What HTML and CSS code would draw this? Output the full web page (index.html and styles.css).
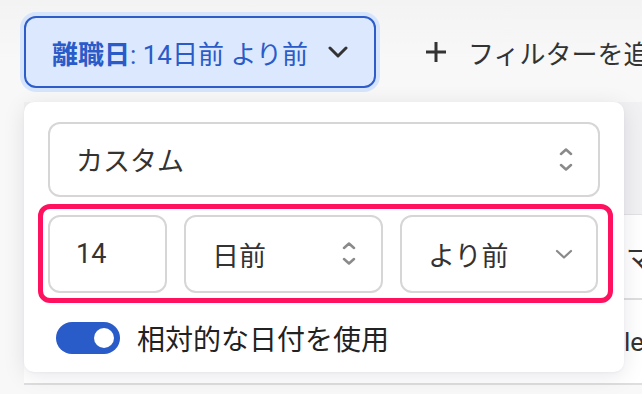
FILE: index.html
```html
<!DOCTYPE html>
<html lang="ja">
<head>
<meta charset="utf-8">
<link rel="stylesheet" href="styles.css">
</head>
<body>
<div class="page">
  <div class="toolbar">
    <button class="filter-chip">
      <span class="chip-label"><b>離職日</b>: 14日前 より前</span>
      <svg class="chip-chevron" width="20" height="20" viewBox="0 0 20 20"><path d="M2 6 L10 14 L18 6" fill="none" stroke="#333" stroke-width="3" stroke-linecap="round" stroke-linejoin="round"/></svg>
    </button>
    <button class="add-filter">
      <svg width="22" height="22" viewBox="0 0 22 22"><path d="M11 1 V21 M1 11 H21" stroke="#333" stroke-width="3"/></svg>
      <span>フィルターを追加</span>
    </button>
  </div>

  <div class="content">
    <div class="table">
      <div class="thead"></div>
      <div class="trow"><span class="cell">テーマ</span></div>
      <div class="trow"><span class="cell">le</span></div>
    </div>

    <div class="popover">
      <div class="field select wide">
        <span>カスタム</span>
        <svg class="updown" width="14" height="24" viewBox="0 0 14 24"><path d="M2 6 L7 1.5 L12 6 M2 17 L7 21.5 L12 17" fill="none" stroke="#8a8a8a" stroke-width="2.5" stroke-linecap="round" stroke-linejoin="round"/></svg>
      </div>
      <div class="range-row">
        <div class="field input num">14</div>
        <div class="field select unit">
          <span>日前</span>
          <svg class="updown" width="14" height="24" viewBox="0 0 14 24"><path d="M2 6 L7 1.5 L12 6 M2 17 L7 21.5 L12 17" fill="none" stroke="#8a8a8a" stroke-width="2.5" stroke-linecap="round" stroke-linejoin="round"/></svg>
        </div>
        <div class="field select dir">
          <span>より前</span>
          <svg class="chev" width="18" height="10" viewBox="0 0 18 10"><path d="M2 2 L9 8.5 L16 2" fill="none" stroke="#8a8a8a" stroke-width="2.2" stroke-linecap="round" stroke-linejoin="round"/></svg>
        </div>
        <div class="highlight"></div>
      </div>
      <div class="toggle-row">
        <span class="toggle"><span class="knob"></span></span>
        <span class="toggle-label">相対的な日付を使用</span>
      </div>
    </div>
  </div>
</div>
</body>
</html>
```

FILE: styles.css
```css
* { box-sizing: border-box; }
html, body { margin: 0; padding: 0; }
body {
  width: 642px;
  height: 394px;
  overflow: hidden;
  background: #f6f6f7;
  font-family: Roboto, "Noto Sans CJK JP", sans-serif;
  color: #333;
}
.page {
  position: relative;
  height: 394px;
  overflow: hidden;
  background: linear-gradient(#f3f3f3, #f8f8f8 60px);
}
.toolbar {
  display: flex;
  align-items: center;
  padding: 16px 0 0 24px;
  height: 88px;
}
.filter-chip {
  display: flex;
  align-items: center;
  height: 72px;
  padding: 0 26px 0 26px;
  border: 2px solid #2c5dc9;
  border-radius: 12px;
  background: #dce8fd;
  box-shadow: 0 0 0 4px #d7e5fc;
  color: #2a5bc8;
  font-family: inherit;
  font-size: 26px;
  white-space: nowrap;
}
.chip-label b { font-weight: 700; }
.chip-chevron { margin-left: 20px; }
.add-filter {
  display: flex;
  align-items: center;
  gap: 21px;
  margin-left: 49px;
  padding: 0;
  border: none;
  background: none;
  color: #333;
  font-family: inherit;
  font-size: 26px;
  white-space: nowrap;
}
.content {
  position: relative;
  height: 306px;
  padding-top: 14px;
}
.table {
  margin-left: 24px;
  background: #fff;
}
.thead {
  height: 113px;
  background: #f1f1f3;
  border-bottom: 1px solid #e2e2e4;
}
.trow {
  height: 85px;
  display: flex;
  align-items: center;
  border-bottom: 2px solid #dedee0;
  font-size: 26px;
  color: #333;
}
.cell {
  margin-left: 550px;
  white-space: nowrap;
}
.trow:last-child .cell { margin-left: 600px; }
.popover {
  position: absolute;
  left: 24px;
  top: 14px;
  width: 600px;
  height: 270px;
  padding: 20px 24px 0 24px;
  background: #fff;
  border-radius: 10px;
  box-shadow: 0 4px 22px rgba(20, 20, 60, 0.10), 0 1px 3px rgba(0,0,0,0.04);
  font-size: 27px;
}
.field {
  display: flex;
  align-items: center;
  justify-content: space-between;
  border: 2px solid #d6d6d6;
  border-radius: 12px;
  background: #fff;
  color: #333;
  padding: 0 25px 0 26px;
}
.wide { height: 75px; }
.range-row {
  position: relative;
  display: flex;
  gap: 17px;
  margin-top: 18px;
  height: 78px;
}
.range-row .field { height: 78px; }
.num { width: 119px; }
.unit { width: 199px; }
.dir { width: 198px; padding-right: 23px; }
.highlight {
  position: absolute;
  left: -10px;
  top: -11px;
  right: -13px;
  bottom: -10px;
  border: 5px solid #ff1160;
  border-radius: 12px;
  pointer-events: none;
}
.toggle-row {
  display: flex;
  align-items: center;
  margin-top: 25px;
  padding-left: 8px;
}
.toggle {
  position: relative;
  width: 64px;
  height: 32px;
  border-radius: 16px;
  background: #2a5cc9;
}
.knob {
  position: absolute;
  right: 6px;
  top: 6px;
  width: 20px;
  height: 20px;
  border-radius: 50%;
  background: #fff;
}
.toggle-label {
  margin-left: 17px;
  font-size: 28px;
  color: #222;
}
```
